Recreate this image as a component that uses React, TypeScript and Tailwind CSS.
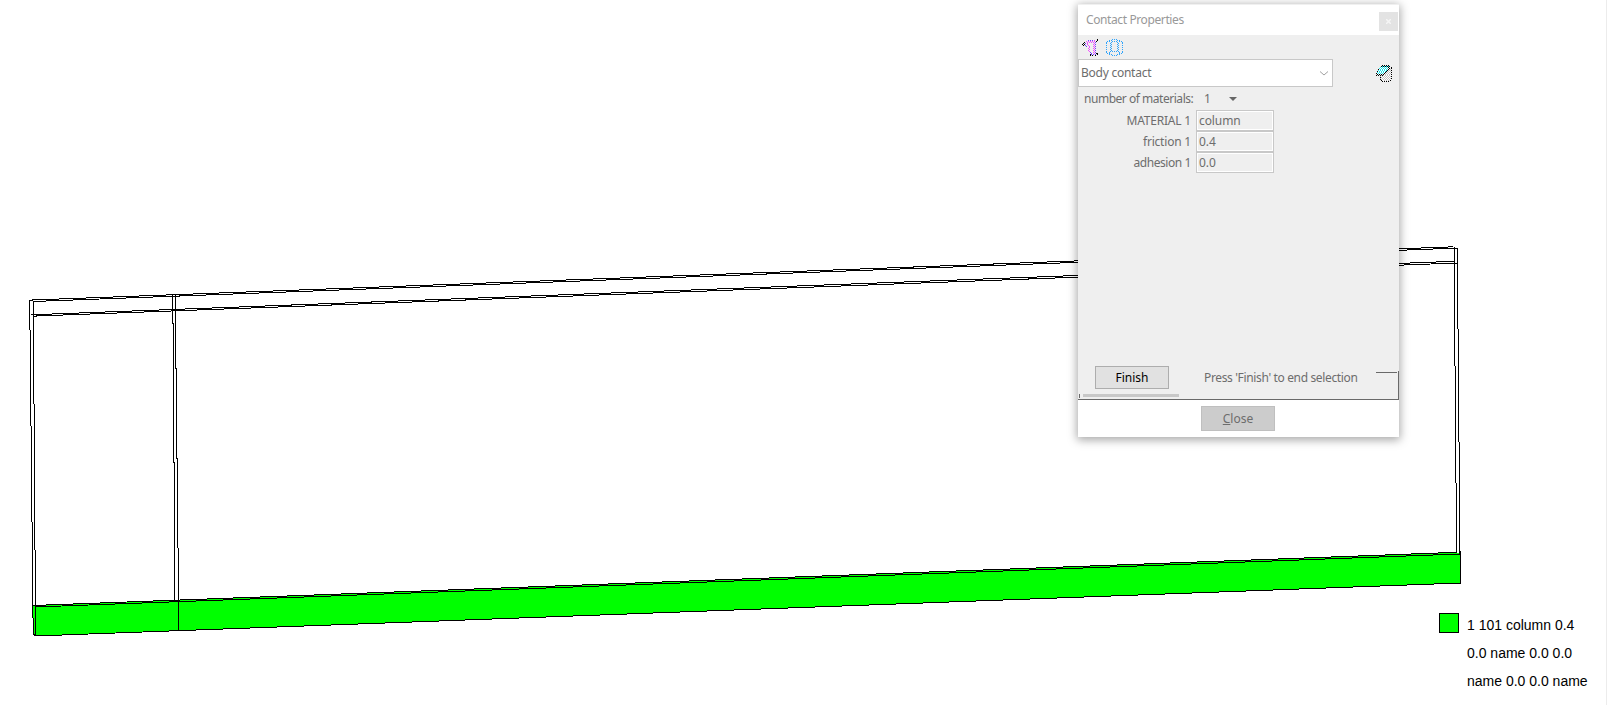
const LINES: [number, number, number, number, number][] = [
  [30, 300.1, 1453, 246.8, 1],
  [33, 301.5, 1457.5, 248.1, 1],
  [31, 314.8, 1455, 261.3, 1],
  [34, 316.1, 1457.5, 263, 1],
  [29.7, 300, 33.2, 635, 1],
  [33.3, 301, 35.6, 636, 1],
  [172.8, 294.5, 175, 601, 1],
  [175.2, 294.5, 178.6, 601, 1],
  [1454, 247, 1456.6, 553, 1],
  [1457.3, 248, 1460, 554, 1],
  [33, 605.5, 1457, 552.3, 1],
  [35, 607, 1460, 554, 1],
  [178.5, 601, 178.5, 631, 1],
  [33, 634.5, 36, 635.5, 1],
  [35, 636, 1461, 583, 1],
  [1460.5, 551, 1460.5, 583, 1],
];

const COLORS: Record<string, string> = {
  k: "#000000",
  m: "#f050ff",
  p: "#7040ff",
  b: "#30a4fb",
  c: "#20e4ea",
  w: "#ffffff",
  g: "#c4c4c4",
};

const CONTACT_ICON = [
  "...............k.",
  "......p.p.p.m..k.",
  "....m.m.m.m.m.k..",
  "..k..m.m.m.m.p...",
  ".k.p.m......m....",
  "k.k..m.....m.p...",
  ".k.p..m.....m....",
  "....p..m...m.p...",
  ".......m....m....",
  "......m....m.p...",
  ".......m....m....",
  "......m....m.p...",
  ".......m....m....",
  "........p..m.p...",
  ".........p..m.kk.",
  "........kp.p.p.k.",
  "........k.k..k...",
];

const BODY_ICON = [
  "......b.b.b......",
  "...b.b.....b.b...",
  ".b.b..b.b.b..b.b.",
  "b....b.....b....b",
  "b...b.......b...b",
  ".....b.....b.....",
  "b...b.......b...b",
  ".....b.....b.....",
  "b...b.......b...b",
  ".....b.....b.....",
  "b...b.......b...b",
  ".....b.....b.....",
  "b...b.b.b.b.b...b",
  "b..b.........b..b",
  ".b.b.........b.b.",
  "...b.b.....b.b...",
  "......b.b.b......",
];

const LAYER_ICON = [
  "......k.k.k.k....",
  ".....kckckckck...",
  "....cwcwcwcwk..k.",
  "...cwcwcwcwcwk.k.",
  "..kwcwcwcwcwk.g..",
  "..cwcwcwcwck.g.k.",
  ".kwcwcwcwck.gwg..",
  ".cwcwcwcwk.gwgwk.",
  "kwcwcwcwk.gwgwg..",
  ".k.k.k.k.gwgwgwk.",
  "k.k.kgkgwgwgwgw..",
  "....gwgwgwgwgwgk.",
  "....kgwgwgwgwgw..",
  "....gwgwgwgwgwgk.",
  "....kgwgwgwgwgw..",
  ".....k.wgwgwg.k..",
  "......k.k.k.k....",
];

function PixelIcon({ rows }: { rows: string[] }) {
  return (
    <svg width="17" height="17" shapeRendering="crispEdges">
      {rows.flatMap((row, y) =>
        [...row].map((c, x) =>
          c === "." ? null : <rect key={`${x}-${y}`} x={x} y={y} width="1" height="1" fill={COLORS[c]} />,
        ),
      )}
    </svg>
  );
}

function Model() {
  return (
    <svg className="absolute inset-0" width="1607" height="705" shapeRendering="crispEdges">
      <polygon points="33,605.5 1460,552.5 1460.5,583 35,636 33,635" fill="#00ff00" />
      {LINES.map(([x1, y1, x2, y2, w], i) => (
        <line key={i} x1={x1} y1={y1} x2={x2} y2={y2} stroke="#000" strokeWidth={w} />
      ))}
    </svg>
  );
}

function Field({ label, value }: { label: string; value: string }) {
  return (
    <div className="flex h-[21px] items-center">
      <span
        className={
          label === "adhesion 1" ? "w-[113px] text-right tracking-[-0.42px]" : "w-[113px] text-right tracking-[-0.2px]"
        }
      >
        {label}
      </span>
      <span className="ml-[5px] h-[21px] w-[78px] border border-[#c8c8c8] pl-[2px] leading-[19px] tracking-[-0.1px] shadow-[inset_0_0_0_1px_#fff]">
        {value}
      </span>
    </div>
  );
}

export default function App() {
  return (
    <div className="relative h-[705px] w-[1607px] overflow-hidden border-r border-[#ececec] bg-white">
      <Model />

      <div className="absolute left-[1078px] top-[4px] flex h-[433px] w-[321px] flex-col border-t border-[#f0f0f0] bg-white font-['Noto_Sans','Open_Sans',sans-serif] text-[12px] text-[#6d6d6d] shadow-[0_2px_9px_1px_rgba(0,0,0,0.35)]">
        <div className="flex h-[30px] shrink-0 items-center justify-between pl-2 pr-px text-[#999]">
          <span className="tracking-[-0.39px]">Contact Properties</span>
          <span className="mt-[3px] flex size-[19px] items-center justify-center bg-[#e3e3e3]">
            <svg width="5" height="5" viewBox="0 0 5 5" stroke="#f5f5f5" strokeWidth="1.5">
              <path d="M0 0L5 5M5 0L0 5" />
            </svg>
          </span>
        </div>

        <div className="flex h-[365px] shrink-0 flex-col border-b border-[#696969] bg-[#efefef]">
          <div className="flex h-6 shrink-0 items-start gap-[7px] pl-1 pt-1">
            <PixelIcon rows={CONTACT_ICON} />
            <PixelIcon rows={BODY_ICON} />
          </div>

          <div className="flex h-7 shrink-0 items-center">
            <div className="flex h-7 w-[255px] items-center justify-between border border-[#c8c8c8] bg-white pl-[2px] pr-1">
              <span className="tracking-[-0.25px]">Body contact</span>
              <svg width="8" height="5" fill="none" stroke="#a0a0a0">
                <path d="M0 .5L4 4L8 .5" />
              </svg>
            </div>
            <div className="ml-[43px]">
              <PixelIcon rows={LAYER_ICON} />
            </div>
          </div>

          <div className="flex h-[23px] shrink-0 items-center pl-[6px]">
            <span className="w-[109px] whitespace-nowrap tracking-[-0.47px]">number of materials:</span>
            <span className="ml-[11px]">1</span>
            <svg className="ml-[18px]" width="8" height="4">
              <path d="M0 0H8L4 4Z" fill="#666" />
            </svg>
          </div>

          <Field label="MATERIAL 1" value="column" />
          <Field label="friction 1" value="0.4" />
          <Field label="adhesion 1" value="0.0" />

          <div className="mt-auto flex h-[33px] justify-between">
            <div className="flex w-[101px] flex-col">
              <div className="ml-[17px] flex h-[23px] w-[74px] items-center justify-center border border-[#adadad] bg-[#e1e1e1] text-black">
                Finish
              </div>
              <div className="mt-[5px] flex items-start gap-[3px] pl-px">
                <span className="h-1 w-px bg-[#696969]" />
                <span className="h-[3px] w-24 bg-[#c8c8c8]" />
              </div>
            </div>
            <span className="ml-[25px] mt-[3px] grow whitespace-nowrap tracking-[-0.35px]">
              Press 'Finish' to end selection
            </span>
            <span className="mr-px mt-[6px] h-px w-[21px] bg-[#696969]" />
            <span className="mt-[5px] w-px bg-[#696969]" />
          </div>
        </div>

        <div className="flex justify-center pr-px pt-[6px]">
          <div className="flex h-[25px] w-[74px] items-center justify-center border border-[#bfbfbf] bg-[#ccc]">
            <span>
              <span className="underline">C</span>lose
            </span>
          </div>
        </div>
      </div>

      <div className="absolute left-[1439px] top-[613px] flex font-['Liberation_Sans',sans-serif] text-[14px] leading-[28px] text-black">
        <span className="size-5 border border-black bg-[#00ff00]" />
        <div className="-mt-[2px] ml-2 whitespace-nowrap">
          <div>1 101 column 0.4</div>
          <div>0.0 name 0.0 0.0</div>
          <div>name 0.0 0.0 name</div>
        </div>
      </div>
    </div>
  );
}
